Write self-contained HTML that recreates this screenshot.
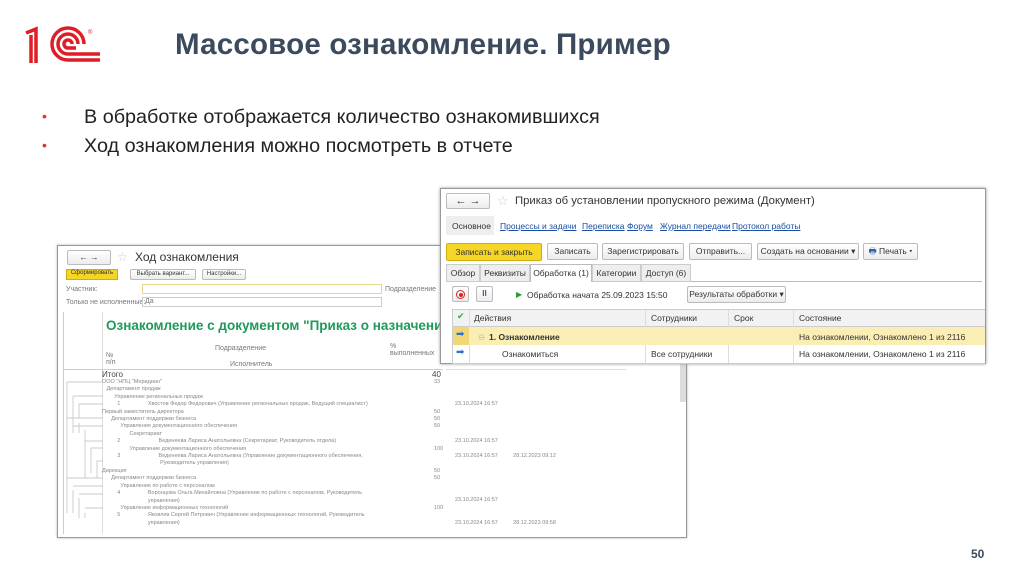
<!DOCTYPE html>
<html><head><meta charset="utf-8"><style>
*{margin:0;padding:0;box-sizing:border-box}
body{width:1024px;height:574px;background:#fff;position:relative;overflow:hidden;font-family:"Liberation Sans",Arial,sans-serif}
.a{position:absolute;white-space:nowrap}
.t{font-size:7px;color:#777}
.s{font-size:8.5px;color:#333}
.btn{position:absolute;border:1px solid #bbb;border-radius:2px;background:linear-gradient(#fff,#ececec);font-size:8.5px;color:#333;text-align:center;line-height:15px;height:17px}
.lnk{color:#1a4ea3;text-decoration:underline;font-size:8.5px}
.r{font-size:5.5px;line-height:7.4px;color:#888}
</style></head><body>
<svg class="a" style="left:24px;top:26px" width="80" height="40" viewBox="0 0 80 40">
<g fill="none" stroke="#e11c24" stroke-width="3.5">
<path d="M2 7 L12 3 V37"/><path d="M7 9 V37"/>
<path d="M60 18 A16 16 0 1 0 44 34 H76"/>
<path d="M54 18 A10 10 0 1 0 44 28 H76"/>
<path d="M48 18 A4 4 0 1 0 44 22 H52"/>
</g><text x="64" y="8" font-size="6" fill="#e11c24">®</text></svg>
<div class="a" style="left:175px;top:28px;font-size:29.5px;font-weight:bold;color:#3b4a5c;letter-spacing:0.2px">Массовое ознакомление. Пример</div>
<div class="a" style="left:42px;top:108px;font-size:14px;color:#d33">•</div>
<div class="a" style="left:84px;top:106px;font-size:19.8px;color:#222">В обработке отображается количество ознакомившихся</div>
<div class="a" style="left:42px;top:137px;font-size:14px;color:#d33">•</div>
<div class="a" style="left:84px;top:135px;font-size:19.8px;color:#222">Ход ознакомления можно посмотреть в отчете</div>

<!-- left window -->
<div class="a" style="left:57px;top:245px;width:630px;height:293px;border:1px solid #999;background:#fff;box-shadow:0 0 2px #aaa"></div>
<div class="btn" style="left:67px;top:250px;width:44px;height:15px;line-height:13px">← →</div>
<div class="a" style="left:117px;top:250px;color:#ccc;font-size:12px">☆</div>
<div class="a" style="left:135px;top:250px;font-size:12px;color:#333">Ход ознакомления</div>
<div class="a" style="left:66px;top:269px;width:52px;height:11px;background:#f5d526;border:1px solid #cfae10;font-size:6px;text-align:center;color:#333">Сформировать</div>
<div class="btn" style="left:130px;top:269px;width:66px;height:11px;line-height:9px;font-size:6px">Выбрать вариант...</div>
<div class="btn" style="left:202px;top:269px;width:44px;height:11px;line-height:9px;font-size:6px">Настройки...</div>
<div class="a t" style="left:66px;top:286px">Участник:</div>
<div class="a" style="left:142px;top:284px;width:240px;height:10px;border:1px solid #e8d68a"></div>
<div class="a t" style="left:385px;top:286px">Подразделение</div>
<div class="a t" style="left:66px;top:299px">Только не исполненные:</div>
<div class="a" style="left:142px;top:297px;width:240px;height:10px;border:1px solid #ccc"></div>
<div class="a t" style="left:145px;top:298px">Да</div>
<div class="a" style="left:63px;top:312px;width:1px;height:222px;background:#ccc"></div>
<div class="a" style="left:102px;top:312px;width:1px;height:222px;background:#ddd"></div>
<div class="a" style="left:106px;top:318px;font-size:13.5px;font-weight:bold;color:#1f9a5a">Ознакомление с документом "Приказ о назначении л</div>
<div class="a t" style="left:215px;top:345px">Подразделение</div>
<div class="a t" style="left:390px;top:343px">%<br>выполненных</div>
<div class="a t" style="left:106px;top:352px">№<br>п/п</div>
<div class="a t" style="left:230px;top:361px">Исполнитель</div>
<div class="a" style="left:63px;top:369px;width:380px;height:1px;background:#ccc"></div>
<div class="a" style="left:446px;top:369px;width:180px;height:1px;background:#ddd"></div>
<div class="a" style="left:102px;top:370px;font-size:8px;color:#444">Итого</div>
<div class="a" style="left:432px;top:370px;font-size:8px;color:#444">40</div>
<div class="a r" style="left:102px;top:379px">
ООО "НПЦ "Меридиан"<br>&nbsp;&nbsp;&nbsp;Департамент продаж<br>&nbsp;&nbsp;&nbsp;&nbsp;&nbsp;&nbsp;&nbsp;&nbsp;Управление региональных продаж<br>&nbsp;&nbsp;&nbsp;&nbsp;&nbsp;&nbsp;&nbsp;&nbsp;&nbsp;&nbsp;1&nbsp;&nbsp;&nbsp;&nbsp;&nbsp;&nbsp;&nbsp;&nbsp;&nbsp;&nbsp;&nbsp;&nbsp;&nbsp;&nbsp;&nbsp;&nbsp;&nbsp;&nbsp;Хвостов Федор Федорович (Управление региональных продаж, Ведущий специалист)<br>Первый заместитель директора<br>&nbsp;&nbsp;&nbsp;&nbsp;&nbsp;&nbsp;Департамент поддержки бизнеса<br>&nbsp;&nbsp;&nbsp;&nbsp;&nbsp;&nbsp;&nbsp;&nbsp;&nbsp;&nbsp;&nbsp;&nbsp;Управление документационного обеспечения<br>&nbsp;&nbsp;&nbsp;&nbsp;&nbsp;&nbsp;&nbsp;&nbsp;&nbsp;&nbsp;&nbsp;&nbsp;&nbsp;&nbsp;&nbsp;&nbsp;&nbsp;&nbsp;Секретариат<br>&nbsp;&nbsp;&nbsp;&nbsp;&nbsp;&nbsp;&nbsp;&nbsp;&nbsp;&nbsp;2&nbsp;&nbsp;&nbsp;&nbsp;&nbsp;&nbsp;&nbsp;&nbsp;&nbsp;&nbsp;&nbsp;&nbsp;&nbsp;&nbsp;&nbsp;&nbsp;&nbsp;&nbsp;&nbsp;&nbsp;&nbsp;&nbsp;&nbsp;&nbsp;&nbsp;Веденеева Лариса Анатольевна (Секретариат, Руководитель отдела)<br>&nbsp;&nbsp;&nbsp;&nbsp;&nbsp;&nbsp;&nbsp;&nbsp;&nbsp;&nbsp;&nbsp;&nbsp;&nbsp;&nbsp;&nbsp;&nbsp;&nbsp;&nbsp;Управление документационного обеспечения<br>&nbsp;&nbsp;&nbsp;&nbsp;&nbsp;&nbsp;&nbsp;&nbsp;&nbsp;&nbsp;3&nbsp;&nbsp;&nbsp;&nbsp;&nbsp;&nbsp;&nbsp;&nbsp;&nbsp;&nbsp;&nbsp;&nbsp;&nbsp;&nbsp;&nbsp;&nbsp;&nbsp;&nbsp;&nbsp;&nbsp;&nbsp;&nbsp;&nbsp;&nbsp;&nbsp;Веденеева Лариса Анатольевна (Управление документационного обеспечения,<br>&nbsp;&nbsp;&nbsp;&nbsp;&nbsp;&nbsp;&nbsp;&nbsp;&nbsp;&nbsp;&nbsp;&nbsp;&nbsp;&nbsp;&nbsp;&nbsp;&nbsp;&nbsp;&nbsp;&nbsp;&nbsp;&nbsp;&nbsp;&nbsp;&nbsp;&nbsp;&nbsp;&nbsp;&nbsp;&nbsp;&nbsp;&nbsp;&nbsp;&nbsp;&nbsp;&nbsp;&nbsp;&nbsp;Руководитель управления)<br>Дирекция<br>&nbsp;&nbsp;&nbsp;&nbsp;&nbsp;&nbsp;Департамент поддержки бизнеса<br>&nbsp;&nbsp;&nbsp;&nbsp;&nbsp;&nbsp;&nbsp;&nbsp;&nbsp;&nbsp;&nbsp;&nbsp;Управление по работе с персоналом<br>&nbsp;&nbsp;&nbsp;&nbsp;&nbsp;&nbsp;&nbsp;&nbsp;&nbsp;&nbsp;4&nbsp;&nbsp;&nbsp;&nbsp;&nbsp;&nbsp;&nbsp;&nbsp;&nbsp;&nbsp;&nbsp;&nbsp;&nbsp;&nbsp;&nbsp;&nbsp;&nbsp;&nbsp;Воронцова Ольга Михайловна (Управление по работе с персоналом, Руководитель<br>&nbsp;&nbsp;&nbsp;&nbsp;&nbsp;&nbsp;&nbsp;&nbsp;&nbsp;&nbsp;&nbsp;&nbsp;&nbsp;&nbsp;&nbsp;&nbsp;&nbsp;&nbsp;&nbsp;&nbsp;&nbsp;&nbsp;&nbsp;&nbsp;&nbsp;&nbsp;&nbsp;&nbsp;&nbsp;&nbsp;управления)<br>&nbsp;&nbsp;&nbsp;&nbsp;&nbsp;&nbsp;&nbsp;&nbsp;&nbsp;&nbsp;&nbsp;&nbsp;Управление информационных технологий<br>&nbsp;&nbsp;&nbsp;&nbsp;&nbsp;&nbsp;&nbsp;&nbsp;&nbsp;&nbsp;5&nbsp;&nbsp;&nbsp;&nbsp;&nbsp;&nbsp;&nbsp;&nbsp;&nbsp;&nbsp;&nbsp;&nbsp;&nbsp;&nbsp;&nbsp;&nbsp;&nbsp;&nbsp;Яковлев Сергей Петрович (Управление информационных технологий, Руководитель<br>&nbsp;&nbsp;&nbsp;&nbsp;&nbsp;&nbsp;&nbsp;&nbsp;&nbsp;&nbsp;&nbsp;&nbsp;&nbsp;&nbsp;&nbsp;&nbsp;&nbsp;&nbsp;&nbsp;&nbsp;&nbsp;&nbsp;&nbsp;&nbsp;&nbsp;&nbsp;&nbsp;&nbsp;&nbsp;&nbsp;управления)</div>
<div class="a r" style="left:434px;top:379px">33<br><br><br><br>50<br>50<br>50<br><br><br>100<br><br><br>50<br>50<br><br><br><br>100</div>
<div class="a r" style="left:455px;top:401px">23.10.2024 16:57<br><br><br><br><br>23.10.2024 16:57<br><br>23.10.2024 16:57&nbsp;&nbsp;&nbsp;&nbsp;&nbsp;&nbsp;&nbsp;&nbsp;&nbsp;&nbsp;28.12.2023 09:12<br><br><br><br><br><br>23.10.2024 16:57<br><br><br>23.10.2024 16:57&nbsp;&nbsp;&nbsp;&nbsp;&nbsp;&nbsp;&nbsp;&nbsp;&nbsp;&nbsp;28.12.2023 09:58</div>
<svg class="a" style="left:63px;top:378px" width="40" height="155"><g stroke="#bbb" fill="none" stroke-width="0.7"><path d="M4 4V135M10 18V55M16 26V40M22 52V100M16 45V55M28 70V95M34 83V100M10 112V135M16 120V140M22 135V140"/><path d="M4 4H40M10 18H40M16 26H40M4 40H40M10 48H40M22 63H40M28 70H40M34 83H40M4 100H40M10 108H40M16 116H40M22 130H40"/></g></svg>
<div class="a" style="left:680px;top:362px;width:6px;height:40px;background:#ddd"></div>

<!-- right window -->
<div class="a" style="left:440px;top:188px;width:546px;height:176px;border:1px solid #999;background:#fff;box-shadow:0 0 3px #999"></div>
<div class="btn" style="left:446px;top:193px;width:44px;height:16px;line-height:14px;font-size:11px">← →</div>
<div class="a" style="left:497px;top:193px;color:#ccc;font-size:13px">☆</div>
<div class="a" style="left:515px;top:195px;font-size:11.3px;color:#333">Приказ об установлении пропускного режима (Документ)</div>
<div class="a" style="left:446px;top:216px;width:48px;height:19px;background:#eee"></div>
<div class="a s" style="left:452px;top:221px">Основное</div>
<div class="a lnk" style="left:500px;top:221px">Процессы и задачи</div>
<div class="a lnk" style="left:582px;top:221px">Переписка</div>
<div class="a lnk" style="left:627px;top:221px">Форум</div>
<div class="a lnk" style="left:660px;top:221px">Журнал передачи</div>
<div class="a lnk" style="left:732px;top:221px">Протокол работы</div>
<div class="a" style="left:446px;top:243px;width:96px;height:18px;background:#f5d526;border:1px solid #d2ae10;border-radius:2px;font-size:8.5px;line-height:16px;text-align:center;color:#333">Записать и закрыть</div>
<div class="btn" style="left:547px;top:243px;width:51px">Записать</div>
<div class="btn" style="left:602px;top:243px;width:82px">Зарегистрировать</div>
<div class="btn" style="left:689px;top:243px;width:63px">Отправить...</div>
<div class="btn" style="left:757px;top:243px;width:102px">Создать на основании ▾</div>
<div class="btn" style="left:863px;top:243px;width:55px"><span style="color:#2a5fa8">🖶</span> Печать ▾</div>
<div class="a" style="left:446px;top:281px;width:536px;height:1px;background:#bbb"></div>
<div class="a s" style="left:446px;top:264px;width:34px;height:18px;border:1px solid #ccc;background:#eee;line-height:16px;text-align:center">Обзор</div>
<div class="a s" style="left:480px;top:264px;width:50px;height:18px;border:1px solid #ccc;background:#eee;line-height:16px;text-align:center">Реквизиты</div>
<div class="a s" style="left:530px;top:264px;width:62px;height:18px;border:1px solid #bbb;border-bottom:none;background:#fff;line-height:16px;text-align:center">Обработка (1)</div>
<div class="a s" style="left:592px;top:264px;width:49px;height:18px;border:1px solid #ccc;background:#eee;line-height:16px;text-align:center">Категории</div>
<div class="a s" style="left:641px;top:264px;width:50px;height:18px;border:1px solid #ccc;background:#eee;line-height:16px;text-align:center">Доступ (6)</div>
<div class="btn" style="left:452px;top:286px;width:17px;height:16px"></div>
<div class="a" style="left:456px;top:290px;width:9px;height:9px;border:1.5px solid #d22;border-radius:50%"></div>
<div class="a" style="left:458.5px;top:292.5px;width:4px;height:4px;background:#d22;border-radius:50%"></div>
<div class="btn" style="left:476px;top:286px;width:17px;height:16px;color:#2a5fa8;font-weight:bold;font-size:8px;line-height:14px">II</div>
<div class="a" style="left:516px;top:290px;font-size:8px;color:#2a9a3a">▶</div>
<div class="a s" style="left:527px;top:290px">Обработка начата 25.09.2023 15:50</div>
<div class="btn" style="left:687px;top:286px;width:99px;height:17px">Результаты обработки ▾</div>
<div class="a" style="left:452px;top:309px;width:533px;height:55px;border:1px solid #ccc;border-right:none"></div>
<div class="a" style="left:453px;top:310px;width:532px;height:17px;background:#f2f2f2;border-bottom:1px solid #ccc"></div>
<div class="a" style="left:457px;top:311px;font-size:9px;color:#3a3">✔</div>
<div class="a s" style="left:474px;top:313px">Действия</div>
<div class="a s" style="left:651px;top:313px">Сотрудники</div>
<div class="a s" style="left:734px;top:313px">Срок</div>
<div class="a s" style="left:799px;top:313px">Состояние</div>
<div class="a" style="left:645px;top:310px;width:1px;height:53px;background:#ddd"></div>
<div class="a" style="left:728px;top:310px;width:1px;height:53px;background:#ddd"></div>
<div class="a" style="left:793px;top:310px;width:1px;height:53px;background:#ddd"></div>
<div class="a" style="left:469px;top:310px;width:1px;height:53px;background:#ddd"></div>
<div class="a" style="left:453px;top:327px;width:532px;height:18px;background:#fbeeb4"></div>
<div class="a" style="left:453px;top:327px;width:16px;height:18px;background:#f1d776"></div>
<div class="a" style="left:456px;top:329px;font-size:10px;color:#2f6fd0">➡</div>
<div class="a" style="left:456px;top:347px;font-size:10px;color:#2f6fd0">➡</div>
<div class="a s" style="left:478px;top:332px;color:#bbb">⊖</div>
<div class="a s" style="left:489px;top:332px;font-weight:bold">1. Ознакомление</div>
<div class="a s" style="left:799px;top:332px">На ознакомлении, Ознакомлено 1 из 2116</div>
<div class="a s" style="left:502px;top:349px">Ознакомиться</div>
<div class="a s" style="left:651px;top:349px">Все сотрудники</div>
<div class="a s" style="left:799px;top:349px">На ознакомлении, Ознакомлено 1 из 2116</div>

<div class="a" style="left:971px;top:547px;font-size:12px;font-weight:bold;color:#3b4a5c">50</div>
</body></html>
